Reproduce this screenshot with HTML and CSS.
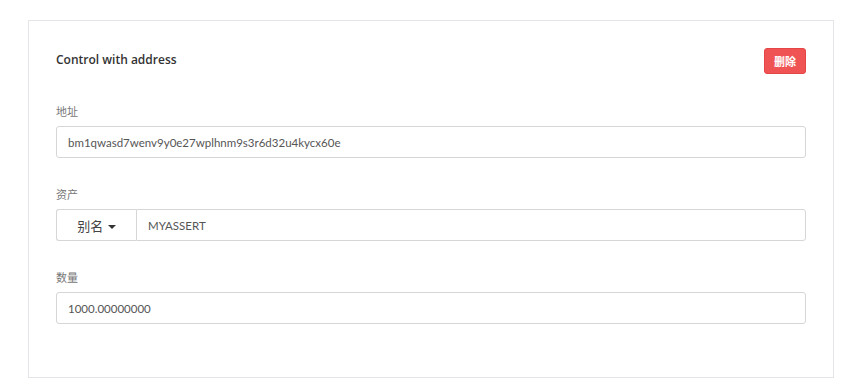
FILE: index.html
```html
<!DOCTYPE html>
<html lang="zh-CN">
<head>
    <meta charset="UTF-8">
    <meta name="viewport" content="width=device-width, initial-scale=1.0">
    <title>Control with address</title>
    <link rel="stylesheet" href="styles.css">
</head>
<body>
    <div class="panel">
        <div class="panel-head">
            <div class="panel-title">Control with address</div>
            <button class="btn-delete">删除</button>
        </div>

        <div class="form-group">
            <label>地址</label>
            <input type="text" class="form-control" value="bm1qwasd7wenv9y0e27wplhnm9s3r6d32u4kycx60e">
        </div>

        <div class="form-group">
            <label>资产</label>
            <div class="input-group">
                <button class="btn-dropdown">别名 <span class="caret"></span></button>
                <input type="text" class="form-control" value="MYASSERT">
            </div>
        </div>

        <div class="form-group">
            <label>数量</label>
            <input type="text" class="form-control" value="1000.00000000">
        </div>
    </div>
</body>
</html>
```

FILE: styles.css
```css
* {
    margin: 0;
    padding: 0;
    box-sizing: border-box;
}

body {
    font-family: Lato, "Noto Sans CJK SC", sans-serif;
    background-color: #fff;
    color: #333;
    padding: 20px 30px 0 28px;
}

.panel {
    border: 1px solid #e3e5e8;
    padding: 27px 27px 53px 27px;
}

.panel-head {
    display: flex;
    justify-content: space-between;
    align-items: center;
    height: 26px;
}

.panel-title {
    font-family: "Open Sans", "Noto Sans CJK SC", sans-serif;
    font-size: 12px;
    font-weight: 600;
    color: #333;
    margin-top: -4px;
}

.btn-delete {
    width: 42px;
    height: 26px;
    background: #ef5353;
    border: 1px solid #e64545;
    border-radius: 3px;
    color: #fff;
    font-family: inherit;
    font-size: 11px;
    font-weight: bold;
}

.form-group {
    margin-top: 30px;
}

.form-group + .form-group {
    margin-top: 29px;
}

label {
    display: block;
    font-size: 11px;
    line-height: 16px;
    color: #777;
    margin-bottom: 6px;
}

.form-control {
    display: block;
    width: 100%;
    height: 32px;
    padding: 0 11px;
    border: 1px solid #d6d6d6;
    border-radius: 3px;
    font-family: inherit;
    font-size: 11.5px;
    color: #555;
    outline: none;
}

.input-group {
    display: flex;
}

.input-group .form-control {
    border-radius: 0 3px 3px 0;
}

.btn-dropdown {
    flex: 0 0 80px;
    height: 32px;
    background: #fff;
    border: 1px solid #d6d6d6;
    border-right: none;
    border-radius: 3px 0 0 3px;
    font-family: inherit;
    font-size: 13px;
    color: #444;
}

.caret {
    display: inline-block;
    width: 0;
    height: 0;
    border-top: 4px solid #333;
    border-left: 4px solid transparent;
    border-right: 4px solid transparent;
    vertical-align: middle;
    margin-left: 1px;
}
```
